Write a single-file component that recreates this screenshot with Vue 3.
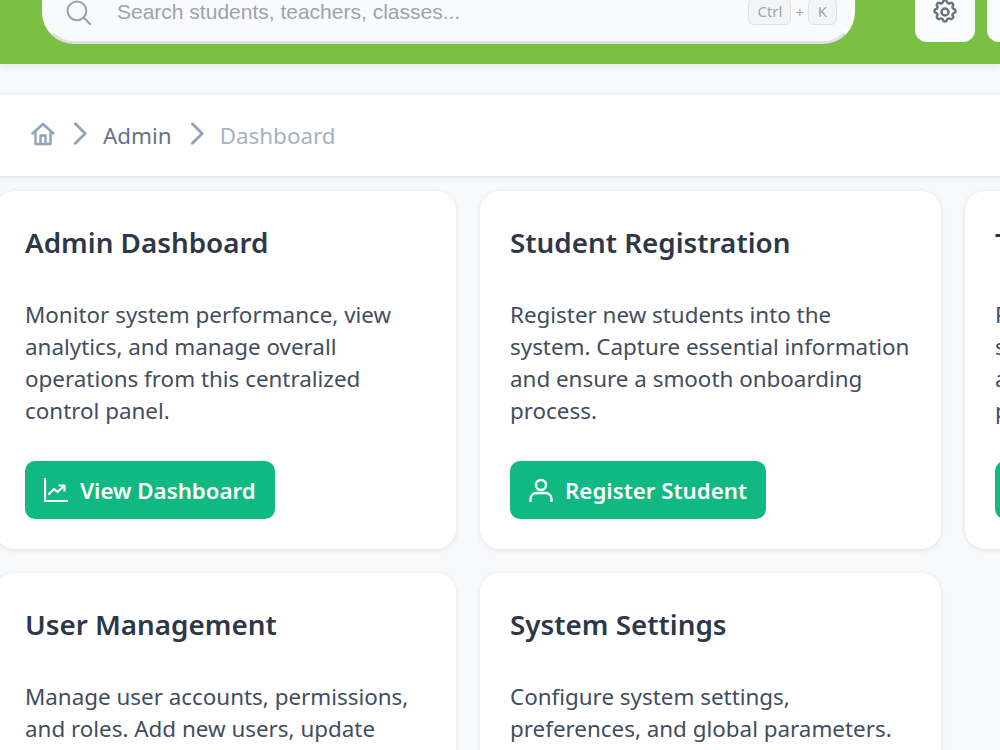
<template>
  <div class="page">
    <header class="topbar">
      <div class="search">
        <svg class="search-icon" viewBox="0 0 24 24" fill="none" stroke="currentColor" stroke-width="2" stroke-linecap="round">
          <circle cx="10.5" cy="10.5" r="9" />
          <path d="M17 17l6 6" />
        </svg>
        <input class="search-input" type="text" placeholder="Search students, teachers, classes..." />
        <div class="shortcut">
          <kbd>Ctrl</kbd>
          <span>+</span>
          <kbd class="key">K</kbd>
        </div>
      </div>
      <button class="top-btn">
        <svg viewBox="0 0 24 24" fill="none" stroke="currentColor" stroke-width="2.1" stroke-linecap="round" stroke-linejoin="round">
          <path d="M10.3 3.3c.4-1.8 3-1.8 3.4 0a1.7 1.7 0 0 0 2.6 1.1c1.5-1 3.4.9 2.4 2.4a1.7 1.7 0 0 0 1 2.6c1.8.4 1.8 3 0 3.4a1.7 1.7 0 0 0-1 2.6c1 1.5-.9 3.4-2.4 2.4a1.7 1.7 0 0 0-2.6 1c-.4 1.8-3 1.8-3.4 0a1.7 1.7 0 0 0-2.6-1c-1.5 1-3.4-.9-2.4-2.4a1.7 1.7 0 0 0-1-2.6c-1.8-.4-1.8-3 0-3.4a1.7 1.7 0 0 0 1-2.6c-1-1.5.9-3.4 2.4-2.4a1.7 1.7 0 0 0 2.6-1.1z" />
          <circle cx="12" cy="12" r="3" />
        </svg>
      </button>
      <button class="top-btn"></button>
    </header>

    <main class="content">
      <nav class="crumbs">
        <svg class="home" viewBox="0 0 24 24" fill="none" stroke="currentColor" stroke-width="2.4" stroke-linecap="round" stroke-linejoin="round">
          <path d="M1.5 11.5L12 2l10.5 9.5" />
          <path d="M4.5 9v13h15V9" />
          <path d="M9.5 22v-8.5h5V22" />
        </svg>
        <svg class="chev" viewBox="0 0 12 20" fill="none" stroke="currentColor" stroke-width="2.5" stroke-linecap="round" stroke-linejoin="round">
          <path d="M2 1.5l8.5 8.5L2 18.5" />
        </svg>
        <span class="crumb-link">Admin</span>
        <svg class="chev" viewBox="0 0 12 20" fill="none" stroke="currentColor" stroke-width="2.5" stroke-linecap="round" stroke-linejoin="round">
          <path d="M2 1.5l8.5 8.5L2 18.5" />
        </svg>
        <span class="crumb-current">Dashboard</span>
      </nav>

      <section class="cards">
        <article class="card" v-for="card in cards" :key="card.title">
          <h2>{{ card.title }}</h2>
          <p>{{ card.text }}</p>
          <button class="action" v-if="card.action">
            <svg v-if="card.icon === 'chart'" viewBox="0 0 24 24" fill="none" stroke="currentColor" stroke-width="2.2" stroke-linecap="round" stroke-linejoin="round">
              <path d="M1 1v22h23" />
              <path d="M5 16l5-5 3.5 3L20 8" />
              <path d="M15.5 7.5h5v5" />
            </svg>
            <svg v-else viewBox="0 0 24 24" fill="none" stroke="currentColor" stroke-width="2.4" stroke-linecap="round" stroke-linejoin="round">
              <circle cx="12" cy="7" r="5" />
              <path d="M1.5 23v-2a6 6 0 0 1 6-6h9a6 6 0 0 1 6 6v2" />
            </svg>
            {{ card.action }}
          </button>
        </article>
      </section>
    </main>
  </div>
</template>

<script setup>
const cards = [
  {
    title: 'Admin Dashboard',
    text: 'Monitor system performance, view analytics, and manage overall operations from this centralized control panel.',
    action: 'View Dashboard',
    icon: 'chart'
  },
  {
    title: 'Student Registration',
    text: 'Register new students into the system. Capture essential information and ensure a smooth onboarding process.',
    action: 'Register Student',
    icon: 'user'
  },
  {
    title: 'Teacher Registration',
    text: 'Register new teaching staff into the system. Capture essential information and assign their classes and subjects properly.',
    action: 'Register Teacher',
    icon: 'user'
  },
  {
    title: 'User Management',
    text: 'Manage user accounts, permissions, and roles. Add new users, update'
  },
  {
    title: 'System Settings',
    text: 'Configure system settings, preferences, and global parameters.'
  }
]
</script>

<style>
html, body {
  margin: 0;
  height: 750px;
  overflow: hidden;
  background: #f8f9fb;
}
</style>

<style scoped>
.page {
  width: 1000px;
  height: 750px;
  overflow: hidden;
  font-family: "Noto Sans", "Open Sans", sans-serif;
}

.topbar {
  height: 64px;
  background: #7ac143;
  display: flex;
  align-items: flex-end;
  padding: 0 0 20px 42px;
  box-sizing: border-box;
  box-shadow: 0 2px 8px rgba(0,0,0,0.08);
}

.search {
  width: 813px;
  height: 80px;
  flex-shrink: 0;
  box-sizing: border-box;
  background: #f9fafc;
  border: 3px solid #fff;
  border-bottom-color: #dfe1e5;
  border-radius: 32px;
  display: flex;
  align-items: flex-end;
  padding: 0 15px 16px 21px;
}

.search-icon {
  width: 25px;
  height: 25px;
  color: #9ca3af;
  flex-shrink: 0;
}

.search-input {
  flex: 1;
  min-width: 0;
  border: none;
  outline: none;
  background: transparent;
  margin-left: 26px;
  padding: 0;
  height: 26px;
  font-family: "Liberation Sans", Arial, sans-serif;
  font-size: 21px;
  color: #334155;
}

.search-input::placeholder {
  color: #9ca3af;
  opacity: 1;
}

.shortcut {
  display: flex;
  align-items: center;
  gap: 4px;
  color: #9ca3af;
  font-size: 15px;
}

kbd {
  font-family: "Noto Sans", sans-serif;
  font-size: 15px;
  line-height: 25px;
  padding: 0 8px;
  background: #f3f4f6;
  border: 1px solid #dfe3e8;
  border-radius: 6px;
}

.key {
  width: 29px;
  box-sizing: border-box;
  padding: 0;
  text-align: center;
}

.top-btn {
  width: 60px;
  height: 60px;
  flex-shrink: 0;
  margin-left: 60px;
  margin-bottom: 2px;
  background: #fafbfc;
  border: none;
  border-radius: 12px;
  display: flex;
  align-items: flex-end;
  justify-content: center;
  padding: 0 0 16px;
  color: #6b7280;
}

.top-btn + .top-btn {
  margin-left: 12px;
}

.top-btn svg {
  width: 28px;
  height: 28px;
}

.content {
  margin: 30px 0 0 -5px;
  width: 1500px;
}

.crumbs {
  height: 82px;
  box-sizing: border-box;
  background: #fff;
  border-top: 1px solid #f1f3f6;
  box-shadow: 0 1px 4px rgba(0,0,0,0.12);
  display: flex;
  align-items: center;
  padding: 0 36px;
  font-size: 22.4px;
  margin-bottom: 15px;
}

.home {
  width: 24px;
  height: 24px;
  color: #8fa3bd;
  margin-top: -4px;
}

.chev {
  width: 14px;
  height: 23px;
  color: #94a3b8;
  margin: -4px 16px 0 18px;
}

.crumb-link {
  color: #64748b;
}

.crumb-current {
  color: #a4b1c4;
}

.cards {
  display: grid;
  grid-template-columns: repeat(3, 461px);
  gap: 24px;
}

.card {
  background: #fff;
  border-radius: 20px;
  padding: 30px;
  box-shadow: 0 1px 5px rgba(0,0,0,0.1);
}

.card h2 {
  margin: 0 0 36px;
  font-size: 27.8px;
  line-height: 42px;
  font-weight: 600;
  color: #2d3748;
}

.card p {
  margin: 0 -6px 34px 0;
  font-size: 22.4px;
  line-height: 32px;
  color: #414d60;
}

.action {
  display: inline-flex;
  align-items: center;
  gap: 12px;
  height: 58px;
  padding: 0 19px;
  border: none;
  border-radius: 10px;
  background: #10b981;
  color: #fff;
  font-family: inherit;
  font-size: 22.3px;
  font-weight: 600;
}

.action svg {
  width: 24px;
  height: 24px;
}
</style>
